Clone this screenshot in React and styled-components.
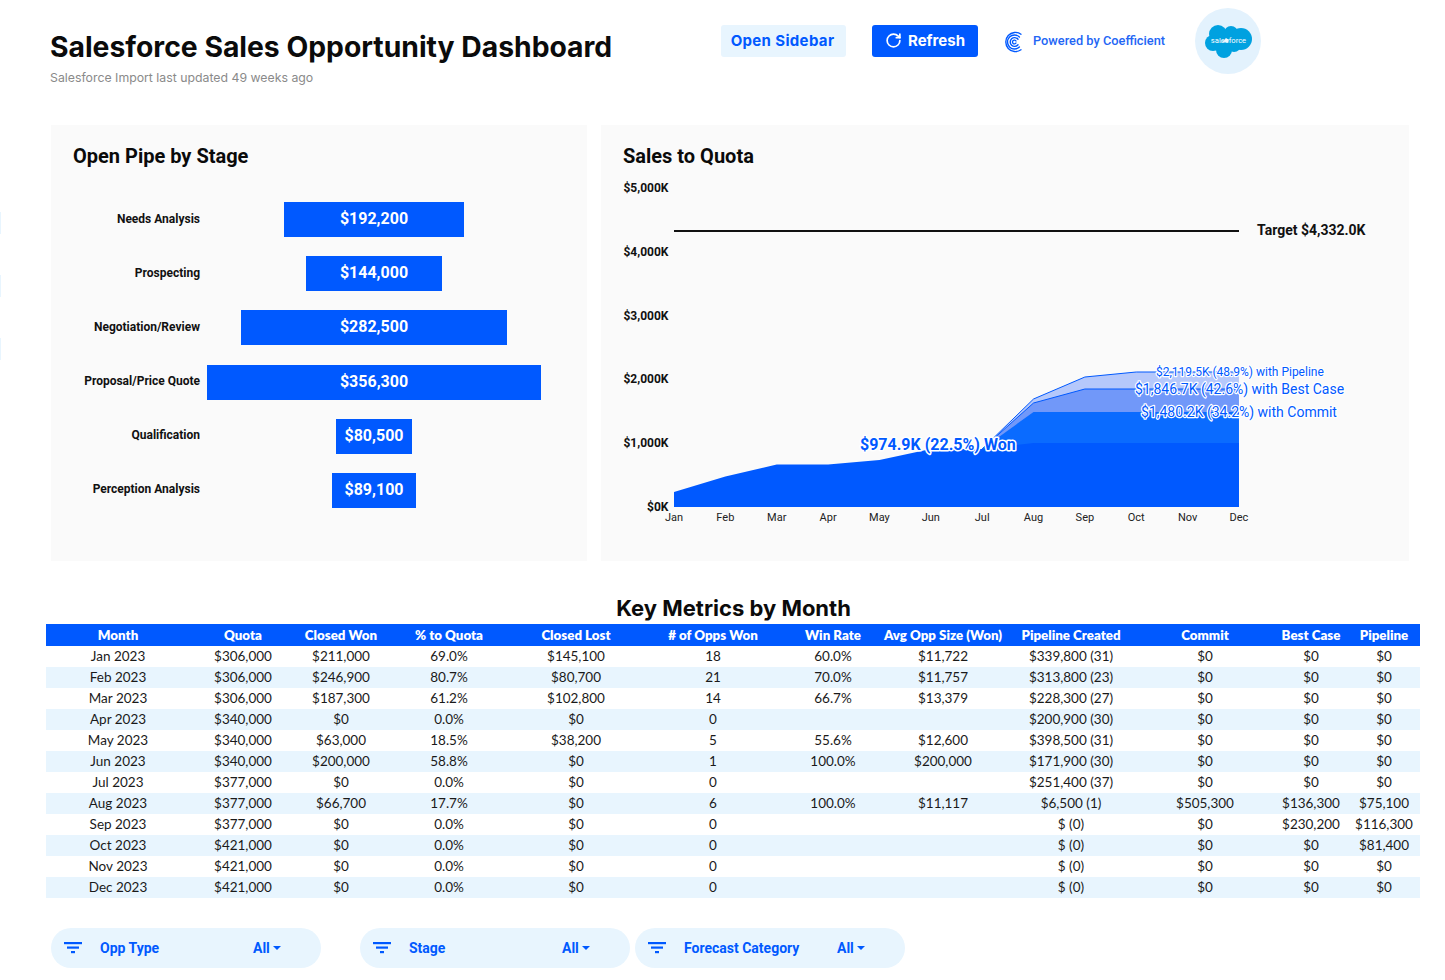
import React from 'react';
import styled, { createGlobalStyle } from 'styled-components';
import { RotateCw } from 'lucide-react';

const BLUE = '#0059ff';
const PALE = '#e8f5fe';

const GlobalStyle = createGlobalStyle`
  html, body {
    margin: 0;
    background: #fff;
    font-family: Roboto, "Liberation Sans", sans-serif;
  }
`;

const Page = styled.div`
  position: relative;
  width: 1445px;
  height: 980px;
  overflow: hidden;
`;

const EdgeSlivers = styled.div`
  position: absolute;
  left: 0;
  top: 212px;
  display: flex;
  flex-direction: column;
  gap: 41px;
`;

const Sliver = styled.div`
  width: 1px;
  height: 22px;
  background: ${PALE};
`;

const Header = styled.header`
  display: flex;
  height: 125px;
  box-sizing: border-box;
  padding: 8px 0 0 50px;
`;

const TitleBlock = styled.div`
  width: 671px;
  padding-top: 20px;
`;

const Title = styled.h1`
  margin: 0;
  font-family: Inter, sans-serif;
  font-size: 28.3px;
  line-height: 38px;
  font-weight: 700;
  color: #0b0b0b;
  white-space: nowrap;
`;

const Subtitle = styled.div`
  margin-top: 3px;
  font-family: Inter, sans-serif;
  font-size: 12.3px;
  line-height: 18px;
  color: #8a8a8a;
`;

const Actions = styled.div`
  display: flex;
  align-items: flex-start;
`;

const Button = styled.button`
  display: flex;
  align-items: center;
  justify-content: center;
  gap: 6px;
  height: 32px;
  margin-top: 17px;
  margin-right: ${props => props.$gap}px;
  width: ${props => props.$width}px;
  padding: 0 ${props => props.$primary ? '0' : '2px'} 2px 0;
  border: none;
  border-radius: 3px;
  font-family: Inter, sans-serif;
  font-size: 15px;
  font-weight: 700;
  letter-spacing: ${props => props.$primary ? '0' : '0.35px'};
  background: ${props => props.$primary ? BLUE : PALE};
  color: ${props => props.$primary ? '#fff' : BLUE};
`;

const Powered = styled.div`
  display: flex;
  align-items: center;
  gap: 10px;
  width: 162px;
  height: 32px;
  margin-top: 17px;
  margin-right: 30px;
  padding-bottom: 2px;
  box-sizing: border-box;
  font-size: 12.8px;
  font-weight: 500;
  color: #2366f5;
  white-space: nowrap;
`;

const LogoMark = styled.svg`
  flex: none;
  margin-top: 4px;
`;

const LogoCircle = styled.div`
  display: flex;
  align-items: center;
  justify-content: center;
  width: 66px;
  height: 66px;
  border-radius: 50%;
  background: #e3f2fd;
`;

const Panels = styled.div`
  display: flex;
  gap: 14px;
  margin-left: 51px;
`;

const Panel = styled.section`
  width: ${props => props.$width}px;
  height: 436px;
  box-sizing: border-box;
  padding-top: 18px;
  background-color: #fafafa;
  background-image: radial-gradient(#f4f4f4 0.6px, transparent 0.6px);
  background-size: 4px 4px;
`;

const PanelTitle = styled.h2`
  margin: 0 0 0 22px;
  font-size: 20px;
  line-height: 26px;
  font-weight: 700;
  color: #0a0a0a;
`;

const Funnel = styled.div`
  display: flex;
  flex-direction: column;
  gap: 19.2px;
  margin-top: 33px;
`;

const FunnelRow = styled.div`
  display: grid;
  grid-template-columns: 149px 334px;
  column-gap: 7px;
  align-items: center;
  height: 35px;
`;

const StageLabel = styled.div`
  padding-bottom: 2px;
  text-align: right;
  font-size: 12px;
  font-weight: 700;
  color: #111;
  white-space: nowrap;
`;

const StageBar = styled.div`
  justify-self: center;
  width: ${props => props.$value * 0.00094}px;
  height: 35px;
  line-height: 34px;
  text-align: center;
  font-size: 16px;
  font-weight: 700;
  color: #fff;
  background: ${BLUE};
`;

const ChartSvg = styled.svg`
  display: block;
  margin-top: 6px;
`;

const AxisY = styled.text`
  font-size: 12px;
  font-weight: 700;
  fill: #111;
  text-anchor: end;
`;

const AxisX = styled.text`
  font-size: 11px;
  fill: #222;
  text-anchor: middle;
`;

const TargetLabel = styled.text`
  font-size: 14px;
  font-weight: 700;
  fill: #111;
`;

const SeriesLabel = styled.text`
  font-size: ${props => props.$size}px;
  font-weight: ${props => props.$bold ? 700 : 400};
  fill: ${BLUE};
  stroke: #fff;
  stroke-width: ${props => props.$bold ? 3 : 2.4}px;
  stroke-linejoin: round;
  paint-order: stroke;
`;

const SectionTitle = styled.h2`
  margin: 33px 0 2px;
  width: 1445px;
  padding-left: 22px;
  box-sizing: border-box;
  text-align: center;
  font-family: Inter, sans-serif;
  font-size: 22px;
  line-height: 28px;
  font-weight: 700;
  color: #0b0b0b;
`;

const Table = styled.table`
  margin-left: 46px;
  width: 1374px;
  table-layout: fixed;
  border-collapse: collapse;
  font-family: Lato, sans-serif;
`;

const Th = styled.th`
  height: 22px;
  padding: 0;
  font-size: 13.3px;
  font-weight: 800;
  color: #fff;
  background: ${BLUE};
  white-space: nowrap;
`;

const Row = styled.tr`
  background: ${props => props.$striped ? PALE : '#fff'};
`;

const Td = styled.td`
  height: 20px;
  padding: 0 0 1px;
  text-align: center;
  font-size: 13.5px;
  color: #1a1a1a;
  white-space: nowrap;
`;

const Filters = styled.div`
  display: flex;
  margin: 30px 0 0 51px;
`;

const FilterPill = styled.div`
  display: flex;
  align-items: center;
  width: 270px;
  height: 40px;
  margin-right: ${props => props.$gap}px;
  box-sizing: border-box;
  padding-left: 13px;
  border-radius: 20px;
  background: ${PALE};
  color: ${BLUE};
  font-size: 14px;
  font-weight: 700;
`;

const FilterName = styled.span`
  width: 153px;
  margin-left: 18px;
  white-space: nowrap;
`;

const Caret = styled.span`
  width: 0;
  height: 0;
  margin-left: 3px;
  border-left: 4px solid transparent;
  border-right: 4px solid transparent;
  border-top: 4px solid ${BLUE};
`;

const stages = [
  ['Needs Analysis', 192200],
  ['Prospecting', 144000],
  ['Negotiation/Review', 282500],
  ['Proposal/Price Quote', 356300],
  ['Qualification', 80500],
  ['Perception Analysis', 89100],
];

const months = ['Jan', 'Feb', 'Mar', 'Apr', 'May', 'Jun', 'Jul', 'Aug', 'Sep', 'Oct', 'Nov', 'Dec'];

const columns = [
  ['Month', 144], ['Quota', 106], ['Closed Won', 90], ['% to Quota', 126],
  ['Closed Lost', 128], ['# of Opps Won', 146], ['Win Rate', 94],
  ['Avg Opp Size (Won)', 126], ['Pipeline Created', 130], ['Commit', 138],
  ['Best Case', 74], ['Pipeline', 72],
];

const rows = [
  ['Jan 2023', '$306,000', '$211,000', '69.0%', '$145,100', '18', '60.0%', '$11,722', '$339,800 (31)', '$0', '$0', '$0'],
  ['Feb 2023', '$306,000', '$246,900', '80.7%', '$80,700', '21', '70.0%', '$11,757', '$313,800 (23)', '$0', '$0', '$0'],
  ['Mar 2023', '$306,000', '$187,300', '61.2%', '$102,800', '14', '66.7%', '$13,379', '$228,300 (27)', '$0', '$0', '$0'],
  ['Apr 2023', '$340,000', '$0', '0.0%', '$0', '0', '', '', '$200,900 (30)', '$0', '$0', '$0'],
  ['May 2023', '$340,000', '$63,000', '18.5%', '$38,200', '5', '55.6%', '$12,600', '$398,500 (31)', '$0', '$0', '$0'],
  ['Jun 2023', '$340,000', '$200,000', '58.8%', '$0', '1', '100.0%', '$200,000', '$171,900 (30)', '$0', '$0', '$0'],
  ['Jul 2023', '$377,000', '$0', '0.0%', '$0', '0', '', '', '$251,400 (37)', '$0', '$0', '$0'],
  ['Aug 2023', '$377,000', '$66,700', '17.7%', '$0', '6', '100.0%', '$11,117', '$6,500 (1)', '$505,300', '$136,300', '$75,100'],
  ['Sep 2023', '$377,000', '$0', '0.0%', '$0', '0', '', '', '$ (0)', '$0', '$230,200', '$116,300'],
  ['Oct 2023', '$421,000', '$0', '0.0%', '$0', '0', '', '', '$ (0)', '$0', '$0', '$81,400'],
  ['Nov 2023', '$421,000', '$0', '0.0%', '$0', '0', '', '', '$ (0)', '$0', '$0', '$0'],
  ['Dec 2023', '$421,000', '$0', '0.0%', '$0', '0', '', '', '$ (0)', '$0', '$0', '$0'],
];

const monthX = i => 674 + i * 51.36;
const toLine = ys => ys.map(([i, y]) => `${monthX(i)},${y}`).join(' ');

// y positions read off the chart, in page coordinates
const wonTop = [[0, 492], [1, 476.5], [2, 464.5], [3, 464.5], [4, 460], [5, 449], [6, 449], [7, 443], [11, 443]];
const commitTop = [[6, 449], [7, 412], [11, 412]];
const bestTop = [[6, 449], [7, 403], [8, 389], [11, 389]];
const pipeTop = [[6, 449], [7, 399], [8, 377], [9, 372], [11, 372]];

const closeArea = top => `${toLine(top)} ${monthX(11)},507 ${monthX(top[0][0])},507`;

const SalesChart = () => (
  <ChartSvg width="808" height="366" viewBox="601 175 808 366">
    {[0, 1, 2, 3, 4, 5].map(n => (
      <AxisY key={n} x="668.5" y={511 - n * 63.8}>{`$${n === 0 ? 0 : n + ',000'}K`}</AxisY>
    ))}
    {months.map((m, i) => (
      <AxisX key={m} x={monthX(i)} y="521">{m}</AxisX>
    ))}
    <line x1="674" x2="1239" y1="231" y2="231" stroke="#111" strokeWidth="2" />
    <TargetLabel x="1257" y="235">Target $4,332.0K</TargetLabel>
    <polygon points={closeArea(pipeTop)} fill="#b5c8fb" />
    <polyline points={toLine(pipeTop)} fill="none" stroke={BLUE} strokeWidth="1" />
    <polygon points={closeArea(bestTop)} fill="#7198f9" />
    <polyline points={toLine(bestTop)} fill="none" stroke={BLUE} strokeWidth="1" />
    <polygon points={closeArea(commitTop)} fill="#0a6bff" />
    <polygon points={closeArea(wonTop)} fill={BLUE} />
    <SeriesLabel x="860" y="450" $size={16} $bold>$974.9K (22.5%) Won</SeriesLabel>
    <SeriesLabel x="1156" y="376" $size={12}>$2,119.5K (48.9%) with Pipeline</SeriesLabel>
    <SeriesLabel x="1135" y="394" $size={14}>$1,846.7K (42.6%) with Best Case</SeriesLabel>
    <SeriesLabel x="1141" y="417" $size={14}>$1,480.2K (34.2%) with Commit</SeriesLabel>
  </ChartSvg>
);

const CoefficientLogo = () => (
  <LogoMark width="20" height="22" viewBox="0 0 20 22" fill="none" stroke={BLUE} strokeWidth="1.4" strokeLinecap="round">
    <path d="M18 3.2A9.6 9.6 0 1 0 18 18.8" />
    <path d="M16.4 6A7 7 0 1 0 16.4 16" />
    <path d="M15 8.2A4.4 4.4 0 1 0 15 13.8" />
    <path d="M13 10A1.9 1.9 0 1 0 13 12" />
  </LogoMark>
);

const SalesforceLogo = () => (
  <svg width="47" height="33" viewBox="0 0 47 33">
    <g fill="#00a1e0">
      <circle cx="13" cy="9" r="9" />
      <circle cx="26" cy="8" r="7" />
      <circle cx="36" cy="14" r="11" />
      <circle cx="29" cy="20" r="7" />
      <circle cx="19" cy="25" r="8" />
      <circle cx="8" cy="18" r="8" />
    </g>
    <text x="23.5" y="18" textAnchor="middle" fontSize="7.6" fill="#fff" fontFamily="Roboto, sans-serif">salesforce</text>
  </svg>
);

const FilterIcon = () => (
  <svg width="18" height="12" viewBox="0 0 18 12" fill={BLUE}>
    <rect x="0" y="0" width="18" height="2.2" />
    <rect x="3" y="4.500" width="12" height="2.200" />
    <rect x="7" y="9" width="4" height="2.200" />
  </svg>
);

const App = () => (
  <Page>
    <GlobalStyle />
    <EdgeSlivers>
      <Sliver />
      <Sliver />
      <Sliver />
    </EdgeSlivers>
    <Header>
      <TitleBlock>
        <Title>Salesforce Sales Opportunity Dashboard</Title>
        <Subtitle>Salesforce Import last updated 49 weeks ago</Subtitle>
      </TitleBlock>
      <Actions>
        <Button $width={125} $gap={26}>Open Sidebar</Button>
        <Button $primary $width={106} $gap={25}>
          <RotateCw size={17} strokeWidth={2.4} />
          Refresh
        </Button>
        <Powered>
          <CoefficientLogo />
          Powered by Coefficient
        </Powered>
        <LogoCircle>
          <SalesforceLogo />
        </LogoCircle>
      </Actions>
    </Header>
    <Panels>
      <Panel $width={536}>
        <PanelTitle>Open Pipe by Stage</PanelTitle>
        <Funnel>
          {stages.map(([name, value]) => (
            <FunnelRow key={name}>
              <StageLabel>{name}</StageLabel>
              <StageBar $value={value}>${value.toLocaleString('en-US')}</StageBar>
            </FunnelRow>
          ))}
        </Funnel>
      </Panel>
      <Panel $width={808}>
        <PanelTitle>Sales to Quota</PanelTitle>
        <SalesChart />
      </Panel>
    </Panels>
    <SectionTitle>Key Metrics by Month</SectionTitle>
    <Table>
      <colgroup>
        {columns.map(([name, width]) => <col key={name} width={width} />)}
      </colgroup>
      <thead>
        <tr>
          {columns.map(([name]) => <Th key={name}>{name}</Th>)}
        </tr>
      </thead>
      <tbody>
        {rows.map((row, i) => (
          <Row key={row[0]} $striped={i % 2 === 1}>
            {row.map((cell, j) => <Td key={j}>{cell}</Td>)}
          </Row>
        ))}
      </tbody>
    </Table>
    <Filters>
      <FilterPill $gap={39}>
        <FilterIcon />
        <FilterName>Opp Type</FilterName>
        All<Caret />
      </FilterPill>
      <FilterPill $gap={5}>
        <FilterIcon />
        <FilterName>Stage</FilterName>
        All<Caret />
      </FilterPill>
      <FilterPill $gap={0}>
        <FilterIcon />
        <FilterName>Forecast Category</FilterName>
        All<Caret />
      </FilterPill>
    </Filters>
  </Page>
);

export default App;
